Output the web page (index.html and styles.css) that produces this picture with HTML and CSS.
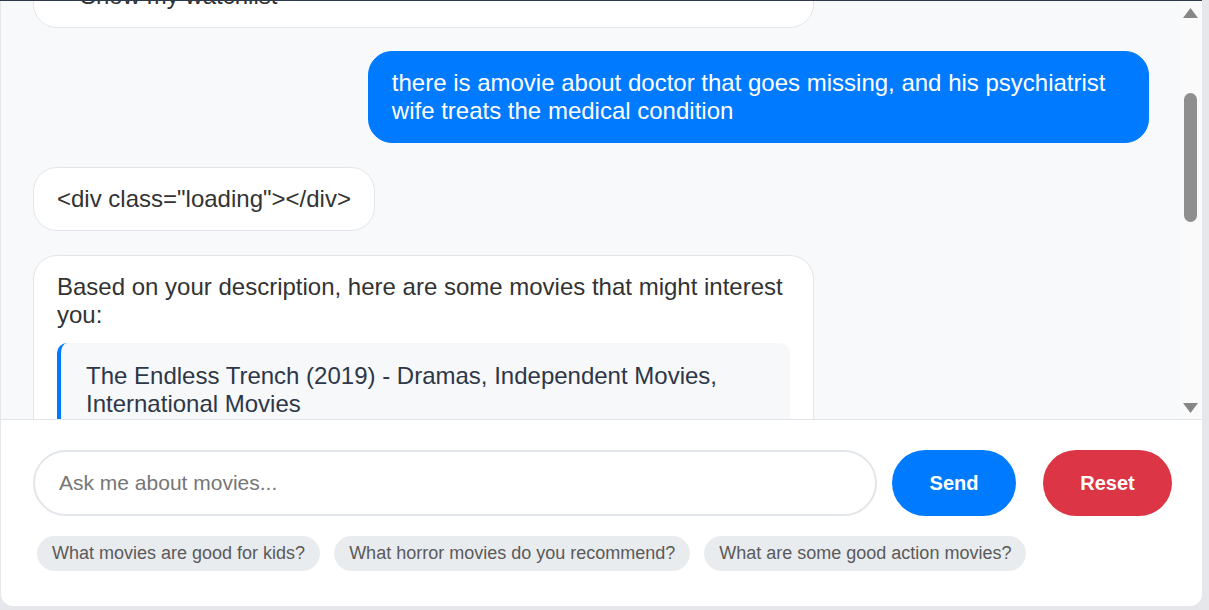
FILE: index.html
```html
<!DOCTYPE html>
<html lang="en">
<head>
<meta charset="utf-8">
<title>Movie Assistant</title>
<link rel="stylesheet" href="styles.css">
</head>
<body>
<div class="topline"></div>
<div class="app">
  <div class="chat">
    <div class="messages" id="messages">
      <div class="msg bot first">
        Hello! I'm your movie assistant. I can help you find movies, get recommendations and manage your watchlist. Try asking me to:
        <ul class="list">
          <li>Find movies by genre or description</li>
          <li>Add movies to your watchlist</li>
          <li>Show my watchlist</li>
        </ul>
      </div>
      <div class="msg user" id="anchor">there is amovie about doctor that goes missing, and his psychiatrist wife treats the medical condition</div>
      <div class="msg bot">&lt;div class="loading"&gt;&lt;/div&gt;</div>
      <div class="msg bot">
        <p class="lead">Based on your description, here are some movies that might interest you:</p>
        <div class="movie">The Endless Trench (2019) - Dramas, Independent Movies, International Movies</div>
      </div>
    </div>
    <div class="rail" aria-hidden="true">
      <svg class="arrow" width="15" height="10" viewBox="0 0 15 10"><path d="M7.5 0 L15 10 L0 10 Z" fill="#868686"/></svg>
      <div class="thumb"></div>
      <svg class="arrow down" width="15" height="10" viewBox="0 0 15 10"><path d="M0 0 L15 0 L7.5 10 Z" fill="#868686"/></svg>
    </div>
  </div>
  <div class="composer">
    <div class="row">
      <input class="field" type="text" placeholder="Ask me about movies...">
      <button class="btn send">Send</button>
      <button class="btn reset">Reset</button>
    </div>
    <div class="chips">
      <button class="chip">What movies are good for kids?</button>
      <button class="chip">What horror movies do you recommend?</button>
      <button class="chip">What are some good action movies?</button>
    </div>
  </div>
</div>
<script src="script.js"></script>
</body>
</html>
```
FILE: styles.css
```css
* { box-sizing: border-box; }
html, body { margin: 0; padding: 0; }
body {
  background: #e6e7eb;
  font-family: "Liberation Sans", Arial, sans-serif;
  font-size: 24px;
  line-height: 28px;
  color: #333333;
  height: 610px;
  overflow: hidden;
}
.topline {
  width: 1202px;
  height: 1px;
  background: #2b3a4c;
}
.app {
  margin-left: 1px;
  width: 1201px;
  height: 605px;
  background: #ffffff;
  border-radius: 0 0 12px 12px;
  overflow: hidden;
  display: flex;
  flex-direction: column;
}
.chat {
  display: flex;
  height: 419px;
  flex: none;
  background: #f8f9fa;
  border-bottom: 1px solid #e2e6ea;
}
.messages {
  position: relative;
  flex: 1;
  overflow: hidden;
  padding: 24px 30px 24px 32px;
  display: flex;
  flex-direction: column;
  align-items: flex-start;
  gap: 24px;
}
.msg {
  max-width: 70%;
  padding: 17px 23px;
  border: 1px solid #e2e6ea;
  border-radius: 24px;
  background: #ffffff;
  flex: none;
}
.msg.first { margin-bottom: -1px; }
.msg.user {
  align-self: flex-end;
  background: #007bff;
  border-color: #007bff;
  color: #ffffff;
}
.list { margin: 0; padding-left: 23px; }
.lead { margin: 0; }
.movie {
  margin: 14px 0 0;
  background: #f7f8fa;
  border-left: 4px solid #007bff;
  border-radius: 10px;
  padding: 19px 24px 19px 25px;
  color: #2d3748;
}
.rail {
  width: 23px;
  flex: none;
  background: #fafafa;
  display: flex;
  flex-direction: column;
  align-items: center;
  padding: 7px 0 6px;
}
.arrow { display: block; flex: none; }
.thumb {
  width: 13px;
  height: 129px;
  margin-top: 75px;
  border-radius: 7px;
  background: #8f8f8f;
  flex: none;
}
.arrow.down { margin-top: auto; }
.composer {
  flex: 1;
  padding: 30px 30px 0 32px;
}
.row {
  display: flex;
  align-items: center;
  gap: 15px;
}
.field {
  flex: 1;
  height: 66px;
  border: 2px solid #e2e6ea;
  border-radius: 33px;
  padding: 0 24px;
  font-family: inherit;
  font-size: 21px;
  color: #333333;
  background: #ffffff;
  outline: none;
}
.field::placeholder { color: #767676; }
.btn {
  height: 66px;
  border: none;
  border-radius: 33px;
  padding: 0;
  font-family: inherit;
  font-size: 20px;
  font-weight: bold;
  line-height: 24px;
  color: #ffffff;
  cursor: pointer;
}
.send { background: #007bff; width: 124px; }
.reset { background: #dc3545; width: 129px; margin-left: 12px; }
.chips {
  display: flex;
  gap: 14px;
  margin-top: 20px;
  padding-left: 4px;
}
.chip {
  height: 35px;
  border: none;
  border-radius: 18px;
  background: #e9ecef;
  color: #5a5a5a;
  font-family: inherit;
  font-size: 18px;
  line-height: 21px;
  padding: 0 15px;
  white-space: nowrap;
}
```
FILE: script.js
```js
var m = document.getElementById('messages');
var a = document.getElementById('anchor');
m.scrollTop = a.offsetTop - 50;
```
